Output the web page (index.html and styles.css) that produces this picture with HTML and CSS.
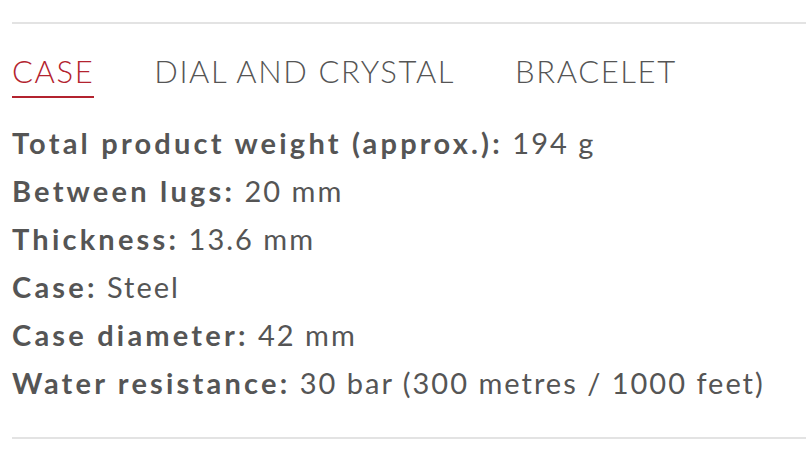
FILE: index.html
```html
<!DOCTYPE html>
<html lang="en">
<head>
<meta charset="utf-8">
<title>Specifications</title>
<link rel="stylesheet" href="styles.css">
</head>
<body>
<section class="specs">
  <div class="rule"></div>
  <nav class="tabs">
    <span class="tab active">CASE</span>
    <span class="tab">DIAL AND CRYSTAL</span>
    <span class="tab">BRACELET</span>
  </nav>
  <ul class="list">
    <li><b>Total product weight (approx.):</b> 194 g</li>
    <li><b>Between lugs:</b> 20 mm</li>
    <li><b>Thickness:</b> 13.6 mm</li>
    <li><b>Case:</b> Steel</li>
    <li><b>Case diameter:</b> 42 mm</li>
    <li><b>Water resistance:</b> 30 bar (300 metres / 1000 feet)</li>
  </ul>
  <div class="rule"></div>
</section>
</body>
</html>
```

FILE: styles.css
```css
html, body {
  margin: 0;
  padding: 0;
  background: #ffffff;
  overflow: hidden;
}
.specs {
  padding: 22px 0 0 12px;
  font-family: "Lato", "Noto Sans", sans-serif;
  color: #555555;
}
.rule {
  height: 2px;
  background: #e3e3e3;
}
.tabs {
  display: flex;
  gap: 60px;
  margin-top: 27px;
}
.tab {
  font-size: 31px;
  font-weight: 300;
  line-height: 40px;
  letter-spacing: 1.6px;
  padding-bottom: 5px;
  border-bottom: 2px solid transparent;
  color: #555555;
}
.tab.active {
  color: #b3232f;
  border-bottom-color: #b3232f;
}
.list {
  list-style: none;
  margin: 21px 0 30px 0;
  padding: 0;
}
.list li {
  font-size: 29px;
  line-height: 48px;
  font-weight: 400;
  letter-spacing: 2px;
  white-space: nowrap;
}
.list b {
  font-weight: 700;
  letter-spacing: 3.2px;
}
```
